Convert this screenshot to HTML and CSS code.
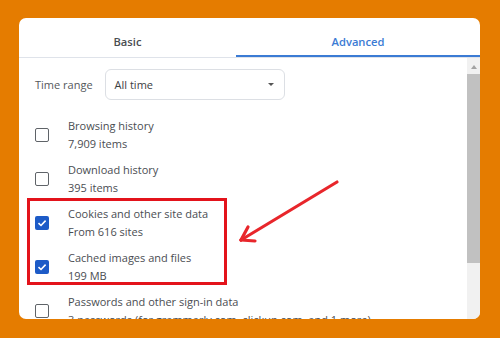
FILE: index.html
```html
<!DOCTYPE html>
<html>
<head>
<meta charset="utf-8">
<link rel="stylesheet" href="styles.css">
</head>
<body>
<div class="card">
  <div class="tabs">
    <div class="tab">Basic</div>
    <div class="tab active">Advanced</div>
  </div>
  <div class="body">
    <div class="content">
      <div class="range">
        <span class="range-label">Time range</span>
        <div class="select">
          <span>All time</span>
          <span class="caret"></span>
        </div>
      </div>
      <div class="items">
        <div class="item">
          <span class="box"></span>
          <div class="text"><div>Browsing history</div><div>7,909 items</div></div>
        </div>
        <div class="item">
          <span class="box"></span>
          <div class="text"><div>Download history</div><div>395 items</div></div>
        </div>
        <div class="item">
          <span class="box checked"><svg viewBox="0 0 14 14" width="14" height="14"><path d="M3.5 7.2 L6 9.5 L10.6 4.6" fill="none" stroke="#fff" stroke-width="1.6"/></svg></span>
          <div class="text"><div>Cookies and other site data</div><div>From 616 sites</div></div>
        </div>
        <div class="item">
          <span class="box checked"><svg viewBox="0 0 14 14" width="14" height="14"><path d="M3.5 7.2 L6 9.5 L10.6 4.6" fill="none" stroke="#fff" stroke-width="1.6"/></svg></span>
          <div class="text"><div>Cached images and files</div><div>199 MB</div></div>
        </div>
        <div class="item">
          <span class="box"></span>
          <div class="text"><div>Passwords and other sign-in data</div><div>3 passwords (for grammarly.com, clickup.com, and 1 more)</div></div>
        </div>
      </div>
    </div>
    <div class="scrollbar">
      <div class="up"></div>
      <div class="thumb"></div>
    </div>
  </div>
</div>
<div class="highlight"></div>
<svg class="arrow" width="120" height="80" viewBox="0 0 120 80">
  <g stroke="#e8262b" stroke-width="3.2" stroke-linecap="round" fill="none">
    <path d="M111 12 L15 70"/>
    <path d="M15 70 L22 57"/>
    <path d="M15 70 L29 71"/>
  </g>
</svg>
</body>
</html>
```
FILE: styles.css
```css
html, body {
  margin: 0;
  padding: 0;
}
body {
  width: 500px;
  height: 338px;
  background: #e57c00;
  font-family: "Open Sans", "Noto Sans", sans-serif;
  overflow: hidden;
  position: relative;
}
.card {
  margin: 18px 0 0 19px;
  width: 461px;
  height: 301px;
  background: #fff;
  border-radius: 7px;
  overflow: hidden;
  display: flex;
  flex-direction: column;
}
.tabs {
  display: grid;
  grid-template-columns: 217px 1fr;
  height: 39px;
  border-bottom: 1px solid #dfe3ea;
  flex: none;
}
.tab {
  display: flex;
  align-items: center;
  justify-content: center;
  font-size: 11.2px;
  font-weight: 600;
  color: #4a4d52;
  padding-top: 7px;
}
.tab.active {
  color: #3b7bd4;
  border-bottom: 2px solid #3b7bd4;
  padding-top: 9px;
}
.body {
  flex: 1;
  display: flex;
  min-height: 0;
}
.content {
  flex: 1;
  padding: 11px 0 0 16px;
  overflow: hidden;
}
.range {
  display: flex;
  align-items: center;
  gap: 12px;
}
.range-label {
  font-size: 11px;
  color: #55585c;
}
.select {
  width: 180px;
  height: 31px;
  box-sizing: border-box;
  border: 1px solid #dcdfe4;
  border-radius: 6px;
  display: flex;
  align-items: center;
  justify-content: space-between;
  padding: 0 9px 0 9px;
  font-size: 11px;
  color: #3c4043;
}
.caret {
  width: 0;
  height: 0;
  border-left: 3.5px solid transparent;
  border-right: 3.5px solid transparent;
  border-top: 3.5px solid #555;
  margin-right: 1px;
}
.items {
  display: flex;
  flex-direction: column;
  gap: 9px;
  margin-top: 17px;
}
.item {
  display: flex;
  align-items: center;
  gap: 19px;
}
.box {
  width: 14px;
  height: 14px;
  box-sizing: border-box;
  border: 1.6px solid #5f6368;
  border-radius: 2px;
  flex: none;
  display: flex;
}
.box.checked {
  background: #1d5bc7;
  border: none;
}
.text {
  font-size: 11px;
  line-height: 17.5px;
  color: #4a4d52;
  white-space: nowrap;
}
.scrollbar {
  width: 13px;
  flex: none;
  background: #f1f1f1;
  display: flex;
  flex-direction: column;
  align-items: center;
}
.up {
  width: 0;
  height: 0;
  border-left: 3.5px solid transparent;
  border-right: 3.5px solid transparent;
  border-bottom: 4px solid #a3a3a3;
  margin-top: 7px;
}
.thumb {
  margin-top: 5px;
  width: 13px;
  height: 189px;
  background: #c1c1c1;
}
.highlight {
  position: absolute;
  left: 27px;
  top: 198px;
  width: 200px;
  height: 87px;
  box-sizing: border-box;
  border: 3px solid #e3131b;
}
.arrow {
  position: absolute;
  left: 226px;
  top: 170px;
}
```
